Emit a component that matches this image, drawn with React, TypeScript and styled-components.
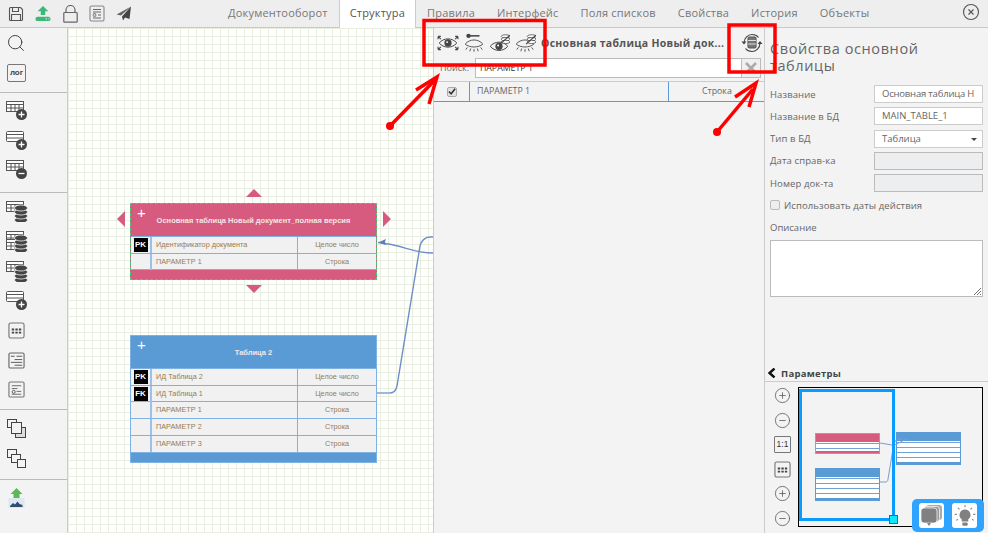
import React from 'react';
import styled, { createGlobalStyle } from 'styled-components';
import { LuSearch, LuCirclePlus, LuCircleMinus, LuCircleX } from 'react-icons/lu';

const GlobalStyle = createGlobalStyle`
  html, body { margin: 0; padding: 0; background: #f3f3f3; overflow: hidden; }
  * { box-sizing: border-box; }
  body { font-family: "Open Sans", "Liberation Sans", sans-serif; }
`;

const tabs = ['Документооборот', 'Структура', 'Правила', 'Интерфейс', 'Поля списков', 'Свойства', 'История', 'Объекты'];

type Row = { key?: string; name: string; type: string };

const mainRows: Row[] = [
  { key: 'PK', name: 'Идентификатор документа', type: 'Целое число' },
  { name: 'ПАРАМЕТР 1', type: 'Строка' },
];

const secondRows: Row[] = [
  { key: 'PK', name: 'ИД Таблица 2', type: 'Целое число' },
  { key: 'FK', name: 'ИД Таблица 1', type: 'Целое число' },
  { name: 'ПАРАМЕТР 1', type: 'Строка' },
  { name: 'ПАРАМЕТР 2', type: 'Строка' },
  { name: 'ПАРАМЕТР 3', type: 'Строка' },
];

const TableGlyph = ({ y = 0, x = 0 }: { x?: number; y?: number }) => (
  <g transform={`translate(${x} ${y})`} fill="#fff" stroke="#555" strokeWidth="1">
    <rect x="0.500" y="0.500" width="17" height="10" />
    <path d="M0.500 3.500h17M0.500 7h17M5 3.500v7M9 3.500v7M13 3.500v7" fill="none" />
  </g>
);

const RowsGlyph = () => (
  <g fill="#fff" stroke="#555" strokeWidth="1">
    <rect x="0.500" y="0.500" width="17" height="10" rx="1" />
    <path d="M0.500 3.500h17M0.500 7h17" fill="none" />
  </g>
);

const Badge = ({ minus }: { minus?: boolean }) => (
  <g>
    <circle cx="15.500" cy="13.500" r="5.500" fill="#444" />
    <path d={minus ? 'M12.500 13.500h6' : 'M12.500 13.500h6M15.500 10.500v6'} stroke="#fff" strokeWidth="1.300" />
  </g>
);

const Barrel = ({ x = 15, y = 8 }: { x?: number; y?: number }) => (
  <g fill="#444" stroke="#f3f3f3" strokeWidth="0.800">
    <ellipse cx={x} cy={y + 12} rx="6.500" ry="3" />
    <ellipse cx={x} cy={y + 8} rx="6.500" ry="3" />
    <ellipse cx={x} cy={y + 4} rx="6.500" ry="3" />
    <ellipse cx={x} cy={y} rx="6.500" ry="3" />
  </g>
);

const FormGlyph = () => (
  <svg width="17" height="17" viewBox="0 0 18 18">
    <rect x="1" y="1" width="16" height="16" rx="1.500" fill="#f3f3f3" stroke="#777" strokeWidth="1.200" />
    <path d="M4 5h10M4 8h6" stroke="#666" fill="none" />
    <circle cx="6" cy="11.500" r="1.600" fill="none" stroke="#555" />
    <path d="M9 11h5M4 14h10" stroke="#666" fill="none" />
  </svg>
);

const LinesGlyph = () => (
  <svg width="17" height="17" viewBox="0 0 18 18">
    <rect x="1" y="1" width="16" height="16" rx="1.500" fill="#f3f3f3" stroke="#666" strokeWidth="1.200" />
    <path d="M3 4.500h4M9 4.500h6M7 8h8M3 11h12M7 14h8" stroke="#555" fill="none" />
  </svg>
);

const DotsGlyph = ({ size = 17 }: { size?: number }) => (
  <svg width={size} height={size} viewBox="0 0 18 18">
    <rect x="1" y="1" width="16" height="16" rx="2" fill="#f3f3f3" stroke="#777" strokeWidth="1.200" />
    <path d="M4 7h2.500v2H4zM7.800 7h2.500v2H7.800zM11.500 7H14v2h-2.500zM4 10.200h2.500v2H4zM7.800 10.200h2.500v2H7.800zM11.500 10.200H14v2h-2.500z" fill="#444" />
  </svg>
);

const LayersGlyph = ({ back }: { back?: boolean }) => (
  <svg width="20" height="20" viewBox="0 0 20 20" fill="#f3f3f3" stroke="#444" strokeWidth="1">
    {back ? (
      <>
        <rect x="0.500" y="0.500" width="9" height="8" />
        <rect x="4.500" y="5.500" width="9" height="8" />
        <rect x="10.500" y="10.500" width="8" height="8" />
      </>
    ) : (
      <>
        <rect x="8.500" y="8.500" width="10" height="10" fill="#ddd" />
        <rect x="0.500" y="0.500" width="9" height="8" />
        <rect x="4.500" y="3.500" width="10" height="11" />
      </>
    )}
  </svg>
);

const EyeOpen = () => (
  <g fill="none" stroke="#444">
    <path d="M2 9c4-5 12-5 16 0-4 5-12 5-16 0z" strokeWidth="0.900" />
    <circle cx="10" cy="9" r="2.800" fill="#444" />
    <circle cx="9.200" cy="8.200" r="0.900" fill="#fff" stroke="none" />
  </g>
);

const EyeShut = () => (
  <g fill="none" stroke="#444" strokeWidth="0.800">
    <path d="M2 10c4-5 12-5 16 0-4 3.500-12 3.500-16 0z" />
    <path d="M4 13l-1.500 2M7 14l-.8 2.500M10 14.500V17M13 14l.8 2.500M16 13l1.500 2" />
  </g>
);

const DbMark = () => (
  <g stroke="#444" fill="#fff" strokeWidth="0.700">
    <ellipse cx="16" cy="3" rx="4" ry="1.500" />
    <ellipse cx="16" cy="5.500" rx="4" ry="1.500" />
    <ellipse cx="16" cy="8" rx="4" ry="1.500" />
    <path d="M11 10l9-8" strokeWidth="1.100" />
  </g>
);

const CHROME = [
  <svg key="save" width="16" height="16" viewBox="0 0 16 16" fill="none" stroke="#555" strokeWidth="1.100">
    <path d="M1.500 2.500a1 1 0 0 1 1-1h10l2 2v10a1 1 0 0 1-1 1h-11a1 1 0 0 1-1-1z" />
    <path d="M4.500 1.500v4h6v-4M3.500 14.500v-6h9v6" />
  </svg>,
  <svg key="upload" width="18" height="18" viewBox="0 0 18 18">
    <path d="M9 0l6 6h-3.500v4h-5V6H3z" fill="#3cb878" />
    <rect x="0.500" y="12" width="17" height="5" rx="2.500" fill="#3cb878" />
    <path d="M12 14.500h1.500M15 14.500h1" stroke="#fff" />
  </svg>,
  <svg key="lock" width="15" height="18" viewBox="0 0 15 18" fill="none" stroke="#666" strokeWidth="1.200">
    <rect x="0.800" y="7.500" width="13.400" height="9.700" rx="0.800" />
    <path d="M3 7.500V5a4.500 4.500 0 0 1 9 0v2.500" />
  </svg>,
  <svg key="doc" width="16" height="17" viewBox="0 0 16 17" fill="#eee" stroke="#888" strokeWidth="1.100">
    <rect x="1" y="1" width="14" height="15" rx="1.500" />
    <path d="M4 4.500h8M4 7h8M9 10h3M4 13h8" stroke="#666" fill="none" />
    <circle cx="5.500" cy="10" r="1.400" fill="none" />
  </svg>,
  <svg key="plane" width="16" height="15" viewBox="0 0 16 15">
    <path d="M15 0.500L0.500 8.500l4.500 1L15 0.500z" fill="#666" />
    <path d="M15 0.500L6 10.500l1 4 2-3 4.500 1.500z" fill="#444" />
  </svg>,
];

const Diagram = ({ title, rows, selected, color }: { title: string; rows: Row[]; selected?: boolean; color: string }) => (
  <Node $color={color} $selected={selected} $top={selected ? 203 : 335}>
    <NodeHead>
      <NodePlus>+</NodePlus>
      <NodeTitle>{title}</NodeTitle>
    </NodeHead>
    {rows.map((row) => (
      <NodeRow key={row.name}>
        <KeyCell>{row.key && <KeyBadge>{row.key}</KeyBadge>}</KeyCell>
        <NameCell>{row.name}</NameCell>
        <TypeCell>{row.type}</TypeCell>
      </NodeRow>
    ))}
    <NodeFoot />
  </Node>
);

const App: React.FC = () => {
  return (
    <Page>
      <GlobalStyle />
      <TopBar>
        <ToolGroup>
          {CHROME.map((icon, i) => (
            <ToolSlot key={i}>{icon}</ToolSlot>
          ))}
        </ToolGroup>
        <Tabs>
          {tabs.map((tab) => (
            <Tab key={tab} $active={tab === 'Структура'}>
              {tab}
            </Tab>
          ))}
        </Tabs>
        <CloseButton>
          <LuCircleX size={18} color="#555" strokeWidth={1.500} />
        </CloseButton>
      </TopBar>

      <Body>
        <Sidebar>
          <SideGroup>
            <SideSlot><LuSearch size={20} color="#444" strokeWidth={1.200} /></SideSlot>
            <SideSlot><LogBadge>лог</LogBadge></SideSlot>
          </SideGroup>
          <SideGroup $height={100} $pad={3}>
            <SideSlot><svg width="22" height="20" viewBox="0 0 22 20"><TableGlyph /><Badge /></svg></SideSlot>
            <SideSlot><svg width="22" height="20" viewBox="0 0 22 20"><RowsGlyph /><Badge /></svg></SideSlot>
            <SideSlot><svg width="22" height="20" viewBox="0 0 22 20"><TableGlyph /><Badge minus /></svg></SideSlot>
          </SideGroup>
          <SideGroup $height={217} $pad={4}>
            <SideSlot><svg width="22" height="21" viewBox="0 0 22 21"><TableGlyph /><Barrel y={7} /></svg></SideSlot>
            <SideSlot><svg width="22" height="21" viewBox="0 0 22 21"><TableGlyph /><TableGlyph y={8} /><Barrel y={7} /></svg></SideSlot>
            <SideSlot><svg width="22" height="21" viewBox="0 0 22 21"><TableGlyph /><Barrel y={7} /></svg></SideSlot>
            <SideSlot><svg width="22" height="20" viewBox="0 0 22 20"><RowsGlyph /><Badge /></svg></SideSlot>
            <SideSlot $inset={2}><DotsGlyph /></SideSlot>
            <SideSlot $inset={2}><LinesGlyph /></SideSlot>
            <SideSlot $inset={2}><FormGlyph /></SideSlot>
          </SideGroup>
          <SideGroup $height={70} $pad={4}>
            <SideSlot $inset={1}><LayersGlyph /></SideSlot>
            <SideSlot $inset={1}><LayersGlyph back /></SideSlot>
          </SideGroup>
          <SideGroup $height={54} $pad={3} $last>
            <SideSlot $inset={2}>
              <svg width="17" height="20" viewBox="0 0 17 20">
                <path d="M8.500 0l6 6h-3v5h-6V6h-3z" fill="#5cb85c" />
                <rect x="0.500" y="10" width="16" height="10" fill="#dfe8f0" />
                <path d="M2 18l3-3 2 1.500 2.500-3 2 2.500 3 1V19H2z" fill="#2d4f73" />
              </svg>
            </SideSlot>
          </SideGroup>
        </Sidebar>

        <Canvas>
          <Diagram title="Основная таблица Новый документ_полная версия" rows={mainRows} selected color="#d75a7f" />
          <Diagram title="Таблица 2" rows={secondRows} color="#5b9bd5" />
          <Handle $dir="up" />
          <Handle $dir="down" />
          <Handle $dir="left" />
          <Handle $dir="right" />
          <LinkLayer viewBox="0 0 365 505">
            <path d="M365 225c-18 0-30-7-45-9-4-.5-6-1-10-1.500" stroke="#6f8fc8" strokeWidth="1.400" fill="none" />
            <path d="M310 365h12c4 0 6-3 7-7l23-140c1-5 5-9 10-9h3" stroke="#6f8fc8" strokeWidth="1.400" fill="none" />
            <path d="M309 365h13" stroke="#9db5e0" strokeWidth="2" fill="none" />
            <path d="M310 214.500l8-3.500-1 3 1 3z" fill="#5d80bd" />
          </LinkLayer>
        </Canvas>

        <Center>
          <CenterHead>
            <EyeGroup>
              <svg width="22" height="20" viewBox="0 0 20 18"><EyeOpen /><path d="M1 3l2.500 2.500M1 3h2.500M1 3v2.500M19 3l-2.500 2.500M19 3h-2.500M19 3v2.500M1 15l2.500-2.500M1 15h2.500M1 15v-2.500M19 15l-2.500-2.500M19 15h-2.500M19 15v-2.500" stroke="#444" fill="none" /></svg>
              <svg width="22" height="20" viewBox="0 0 20 18"><EyeShut /><path d="M4 2.500h11" stroke="#444" strokeWidth="1.400" /><circle cx="5" cy="2.500" r="2" fill="#444" /></svg>
              <svg width="22" height="20" viewBox="0 0 20 18"><g transform="translate(0 3)"><EyeOpen /></g><DbMark /></svg>
              <svg width="22" height="20" viewBox="0 0 20 18"><EyeShut /><DbMark /></svg>
            </EyeGroup>
            <CenterTitle>Основная таблица Новый док...</CenterTitle>
            <RefreshSlot>
              <svg width="22" height="20" viewBox="0 0 22 20" fill="none" stroke="#444" strokeWidth="1.100">
                <rect x="7" y="4" width="8" height="11" rx="1.500" fill="#777" stroke="#555" />
                <path d="M7 7.500h8M7 11h8" stroke="#ddd" />
                <path d="M3 10c0-5 4-8.500 8-8.500 3 0 5 1 6.500 3M19 10c0 5-4 8.500-8 8.500-3 0-5-1-6.500-3" />
                <path d="M0.500 8.500l2.500 3 2.500-3zM16.500 11l2.500-3 2.500 3z" fill="#444" stroke="none" />
              </svg>
            </RefreshSlot>
          </CenterHead>
          <SearchRow>
            <SearchLabel>Поиск:</SearchLabel>
            <SearchBox>
              <SearchInput>ПАРАМЕТР 1</SearchInput>
              <ClearButton>
                <svg width="14" height="14" viewBox="0 0 14 14"><path d="M2 2l10 10M12 2L2 12" stroke="#aaa" strokeWidth="2.600" /></svg>
              </ClearButton>
            </SearchBox>
          </SearchRow>
          <ParamRow>
            <ParamCheck>
              <CheckBox>
                <svg width="9" height="9" viewBox="0 0 9 9"><path d="M1 4.500l2.500 2.500L8 1.500" stroke="#333" strokeWidth="1.800" fill="none" /></svg>
              </CheckBox>
            </ParamCheck>
            <ParamName>ПАРАМЕТР 1</ParamName>
            <ParamType>Строка</ParamType>
          </ParamRow>
        </Center>

        <Props>
          <PropsForm>
            <PropsTitle>Свойства основной таблицы</PropsTitle>
            <Field>
              <FieldLabel>Название</FieldLabel>
              <FieldValue><FieldText $tight>Основная таблица Н</FieldText></FieldValue>
            </Field>
            <Field>
              <FieldLabel>Название в БД</FieldLabel>
              <FieldValue><FieldText>MAIN_TABLE_1</FieldText></FieldValue>
            </Field>
            <Field>
              <FieldLabel>Тип в БД</FieldLabel>
              <FieldValue>
                <FieldText>Таблица</FieldText>
                <SelectCaret />
              </FieldValue>
            </Field>
            <Field>
              <FieldLabel>Дата справ-ка</FieldLabel>
              <FieldValue $disabled />
            </Field>
            <Field>
              <FieldLabel>Номер док-та</FieldLabel>
              <FieldValue $disabled />
            </Field>
            <CheckRow>
              <EmptyCheck />
              Использовать даты действия
            </CheckRow>
            <DescLabel>Описание</DescLabel>
            <DescBox>
              <svg width="9" height="9" viewBox="0 0 9 9"><path d="M1 8l7-7M4 8l4-4M7 8l1-1" stroke="#777" fill="none" /></svg>
            </DescBox>
          </PropsForm>
          <ParamsHead>
            <svg width="8" height="10" viewBox="0 0 8 10"><path d="M6.500 0.500L1.500 5l5 4.500" stroke="#111" strokeWidth="2.400" fill="none" /></svg>
            Параметры
          </ParamsHead>
          <MapArea>
            <MapTools>
              <LuCirclePlus size={17} color="#555" strokeWidth={1.100} />
              <LuCircleMinus size={17} color="#555" strokeWidth={1.100} />
              <OneToOne>1:1</OneToOne>
              <DotsGlyph size={17} />
              <LuCirclePlus size={17} color="#555" strokeWidth={1.100} />
              <LuCircleMinus size={17} color="#555" strokeWidth={1.100} />
            </MapTools>
            <MiniMap>
              <MiniTable $x={16} $y={45} $h={21} $color="#d75a7f" $foot />
              <MiniTable $x={16} $y={80} $h={33} $color="#5b9bd5" />
              <MiniTable $x={97} $y={44} $h={33} $color="#5b9bd5" />
              <MiniLinks viewBox="0 0 184 139">
                <path d="M81 55l12 2c4 1 8-4 16-6M81 94h5c2 0 3-1 3-3l6-36c1-3 4-4 8-4" stroke="#7d9bd0" fill="none" />
              </MiniLinks>
              <MiniView>
                <MiniGrip />
              </MiniView>
            </MiniMap>
          </MapArea>
          <HelpDock>
            <HelpButton>
              <svg width="23" height="23" viewBox="0 0 23 23">
                <rect x="6" y="1" width="16" height="15" rx="3" fill="#aaa" />
                <rect x="3.500" y="2.500" width="16" height="15" rx="3" fill="#999" stroke="#fff" strokeWidth="0.700" />
                <rect x="1" y="4" width="16" height="15" rx="3" fill="#808080" stroke="#fff" strokeWidth="0.700" />
                <path d="M7 19h4l-2 3z" fill="#808080" />
              </svg>
            </HelpButton>
            <HelpButton>
              <svg width="24" height="24" viewBox="0 0 22 22" fill="#808080">
                <path d="M11 5a5 5 0 0 0-3 9v2h6v-2a5 5 0 0 0-3-9z" />
                <rect x="8.500" y="17" width="5" height="3" rx="1" />
                <path d="M11 1v2M4.500 3.500l1.500 1.500M17.500 3.500L16 5M1.500 9.500h2M18.500 9.500h2M3 15l1.500-1M19 15l-1.500-1" stroke="#888" fill="none" />
              </svg>
            </HelpButton>
          </HelpDock>
        </Props>
      </Body>

      <Annotations viewBox="0 0 988 533">
        <rect x="424" y="20.500" width="121" height="44.500" fill="none" stroke="#f00" strokeWidth="3.500" />
        <rect x="729" y="25" width="46" height="47" fill="none" stroke="#f00" strokeWidth="3.500" />
        <path d="M390 126L435 80" stroke="#f00" strokeWidth="3.500" fill="none" />
        <path d="M416 90l21-13-8 27" stroke="#f00" strokeWidth="3.500" fill="none" />
        <circle cx="390" cy="126" r="4" fill="#f00" />
        <path d="M717 132L753 89" stroke="#f00" strokeWidth="3.500" fill="none" />
        <path d="M735 97l21-14-7 24" stroke="#f00" strokeWidth="3.500" fill="none" />
        <circle cx="717" cy="132" r="4" fill="#f00" />
      </Annotations>
    </Page>
  );
};

const Page = styled.div`
  position: relative;
  width: 988px;
  height: 533px;
  overflow: hidden;
  display: flex;
  flex-direction: column;
  background: #f3f3f3;
`;

const TopBar = styled.header`
  display: flex;
  align-items: stretch;
  height: 28px;
  background: #eee;
  border-bottom: 1px solid #c8c8c8;
`;

const ToolGroup = styled.div`
  display: flex;
  align-items: center;
  width: 217px;
  padding-left: 8px;
  gap: 11px;
`;

const ToolSlot = styled.span`
  display: flex;
  width: 16px;
  justify-content: center;
`;

const Tabs = styled.nav`
  display: flex;
  flex: 1;
`;

const Tab = styled.div<{ $active?: boolean }>`
  padding: 5px 11px 0;
  height: 28px;
  font-size: 11px;
  letter-spacing: 0.200px;
  line-height: 16px;
  color: #777;
  white-space: nowrap;
  ${(p) =>
    p.$active &&
    `
    background: #fff;
    color: #555;
    box-shadow: inset 1px 0 #ccc, inset -1px 0 #ccc;
  `}
`;

const CloseButton = styled.div`
  display: flex;
  align-items: center;
  padding: 0 8px 4px 0;
`;

const Body = styled.div`
  display: flex;
  flex: 1;
  min-height: 0;
`;

const Sidebar = styled.aside`
  width: 68px;
  flex: none;
  background: #f3f3f3;
  border-right: 1px solid #ccc;
`;

const SideGroup = styled.div<{ $height?: number; $pad?: number; $last?: boolean }>`
  height: ${(p) => p.$height ?? 65}px;
  padding-top: ${(p) => p.$pad ?? 0}px;
  border-bottom: ${(p) => (p.$last ? 'none' : '1px solid #bbb')};
`;

const SideSlot = styled.div<{ $inset?: number }>`
  display: flex;
  align-items: center;
  height: 29.700px;
  padding-left: ${(p) => 6 + (p.$inset ?? 0)}px;
`;

const LogBadge = styled.div`
  width: 19px;
  height: 18px;
  margin-left: 1px;
  border: 1px solid #777;
  border-radius: 2px;
  font-family: "Liberation Sans", sans-serif;
  font-size: 8px;
  font-weight: bold;
  line-height: 15px;
  text-align: center;
  color: #444;
`;

const Canvas = styled.main`
  position: relative;
  width: 365px;
  flex: none;
  background-color: #fff;
  background-image: linear-gradient(#e9efdf 1px, transparent 1px), linear-gradient(90deg, #e9efdf 1px, transparent 1px);
  background-size: 8px 8px;
  overflow: hidden;
`;

const Node = styled.div<{ $color: string; $selected?: boolean; $top: number }>`
  position: absolute;
  left: 62px;
  top: ${(p) => p.$top - 28}px;
  width: 247px;
  background: ${(p) => p.$color};
  border: 1px ${(p) => (p.$selected ? 'dashed #3fcf75' : 'solid #7fb2e2')};
  font-family: "Liberation Sans", sans-serif;
`;

const NodeHead = styled.div`
  position: relative;
  height: 32px;
  display: flex;
  align-items: center;
  justify-content: center;
`;

const NodePlus = styled.span`
  position: absolute;
  left: 6px;
  top: -1px;
  color: #fff;
  font-size: 15px;
  line-height: 20px;
`;

const NodeTitle = styled.span`
  font-size: 7.500px;
  font-weight: bold;
  color: #f4e6ea;
  white-space: nowrap;
`;

const NodeRow = styled.div`
  display: grid;
  grid-template-columns: 19px 147px 1fr;
  height: 17px;
  margin-bottom: -0.300px;
  background: #f1f1f1;
  border-top: 1px solid #7fb2e2;
  font-size: 7.300px;
  color: #9a7b4f;
  line-height: 15px;
`;

const KeyCell = styled.div`
  display: flex;
  align-items: center;
  justify-content: center;
`;

const KeyBadge = styled.span`
  display: block;
  width: 14px;
  height: 14px;
  background: #000;
  color: #fff;
  font-weight: bold;
  font-size: 8px;
  line-height: 13px;
  text-align: center;
`;

const NameCell = styled.div`
  padding-left: 4px;
  border-left: 2px solid #9cc0e8;
  white-space: nowrap;
`;

const TypeCell = styled.div`
  border-left: 1px solid #7fb2e2;
  text-align: center;
`;

const NodeFoot = styled.div`
  height: 10px;
  border-top: 1px solid #7fb2e2;
`;

const Handle = styled.span<{ $dir: 'up' | 'down' | 'left' | 'right' }>`
  position: absolute;
  width: 0;
  height: 0;
  border-style: solid;
  border-color: transparent;
  ${(p) => p.$dir === 'up' && 'left: 178px; top: 161px; border-width: 0 8px 8px; border-bottom-color: #d75a7f;'}
  ${(p) => p.$dir === 'down' && 'left: 178px; top: 257px; border-width: 8px 8px 0; border-top-color: #d75a7f;'}
  ${(p) => p.$dir === 'left' && 'left: 49px; top: 183px; border-width: 8px 8px 8px 0; border-right-color: #d75a7f;'}
  ${(p) => p.$dir === 'right' && 'left: 315px; top: 183px; border-width: 8px 0 8px 8px; border-left-color: #d75a7f;'}
`;

const LinkLayer = styled.svg`
  position: absolute;
  left: 0;
  top: 0;
  width: 365px;
  height: 505px;
  pointer-events: none;
`;

const Center = styled.section`
  width: 332px;
  flex: none;
  background: #f3f3f3;
  border-left: 1px solid #ccc;
  border-right: 1px solid #ccc;
`;

const CenterHead = styled.div`
  display: flex;
  align-items: center;
  height: 30px;
  padding-left: 3px;
`;

const EyeGroup = styled.div`
  display: flex;
  gap: 3.500px;
  width: 104px;
  flex: none;
`;

const CenterTitle = styled.div`
  width: 185px;
  flex: none;
  font-size: 10.500px;
  font-weight: bold;
  letter-spacing: 0.300px;
  color: #555;
  white-space: nowrap;
`;

const RefreshSlot = styled.div`
  display: flex;
  margin-left: 15px;
`;

const SearchRow = styled.div`
  display: flex;
  align-items: center;
  height: 20px;
  padding: 0 3px;
`;

const SearchLabel = styled.div`
  width: 38px;
  padding-left: 3px;
  font-size: 9px;
  line-height: 20px;
  color: #666;
`;

const SearchBox = styled.div`
  display: flex;
  width: 287px;
  height: 20px;
  border: 1px solid #bbb;
  background: #fff;
`;

const SearchInput = styled.div`
  flex: 1;
  padding-left: 4px;
  font-size: 8.800px;
  line-height: 19px;
  color: #333;
`;

const ClearButton = styled.div`
  width: 19px;
  display: flex;
  align-items: center;
  justify-content: center;
  background: #f0f0f0;
  border-left: 1px solid #bbb;
`;

const ParamRow = styled.div`
  display: grid;
  grid-template-columns: 35px 199px 1fr;
  height: 21px;
  margin-top: 3px;
  border-top: 1px solid #ccc;
  border-bottom: 1px solid #5b9bd5;
  font-size: 8.800px;
  line-height: 19px;
  color: #666;
`;

const ParamCheck = styled.div`
  display: flex;
  align-items: center;
  justify-content: center;
`;

const CheckBox = styled.span`
  display: flex;
  align-items: center;
  justify-content: center;
  width: 10px;
  height: 10px;
  background: #e3e3e3;
  border: 1px solid #aaa;
  border-radius: 2px;
`;

const ParamName = styled.div`
  padding-left: 7px;
  border-left: 1px solid #5b9bd5;
`;

const ParamType = styled.div`
  padding-left: 33px;
  border-left: 1px solid #5b9bd5;
`;

const Props = styled.aside`
  position: relative;
  flex: 1;
  display: flex;
  flex-direction: column;
  padding-left: 5px;
  min-width: 0;
`;

const PropsForm = styled.div`
  height: 325px;
  padding: 12px 5px 0 0;
`;

const PropsTitle = styled.h2`
  margin: 0 0 11px;
  font-size: 14.500px;
  font-weight: normal;
  letter-spacing: 0.600px;
  line-height: 17px;
  color: #666;
`;

const Field = styled.div`
  display: grid;
  grid-template-columns: 104px 109px;
  align-items: center;
  height: 18px;
  margin-bottom: 4.300px;
`;

const FieldLabel = styled.div`
  font-size: 9.500px;
  letter-spacing: 0.100px;
  color: #666;
  white-space: nowrap;
`;

const FieldValue = styled.div<{ $disabled?: boolean }>`
  position: relative;
  height: 18px;
  border: 1px solid ${(p) => (p.$disabled ? '#bbb' : '#ccc')};
  background: ${(p) => (p.$disabled ? '#eceeef' : '#fff')};
`;

const FieldText = styled.div<{ $tight?: boolean }>`
  margin-left: 7px;
  font-size: 9.500px;
  letter-spacing: ${(p) => (p.$tight ? '-0.200px' : '0')};
  line-height: 16px;
  color: #666;
  white-space: nowrap;
`;

const SelectCaret = styled.span`
  position: absolute;
  right: 5px;
  top: 7px;
  border-style: solid;
  border-width: 3px 3.500px 0;
  border-color: #444 transparent transparent;
`;

const CheckRow = styled.div`
  display: flex;
  align-items: center;
  gap: 4px;
  height: 18px;
  margin-top: 4px;
  font-size: 9.500px;
  letter-spacing: 0.100px;
  color: #666;
`;

const EmptyCheck = styled.span`
  width: 10px;
  height: 10px;
  border: 1px solid #bbb;
  border-radius: 2px;
  background: #eee;
`;

const DescLabel = styled.div`
  margin-top: 5px;
  font-size: 9.500px;
  line-height: 18px;
  color: #666;
`;

const DescBox = styled.div`
  display: flex;
  align-items: flex-end;
  justify-content: flex-end;
  width: 213px;
  height: 57px;
  margin-top: 3px;
  background: #fff;
  border: 1px solid #bbb;
`;

const ParamsHead = styled.div`
  display: flex;
  align-items: center;
  gap: 5px;
  height: 29px;
  margin-left: -5px;
  padding: 12px 0 0 3px;
  border-bottom: 1px solid #ccc;
  font-size: 9.500px;
  font-weight: 700;
  letter-spacing: 0.300px;
  color: #444;
`;

const MapArea = styled.div`
  display: flex;
  padding-top: 5px;
`;

const MapTools = styled.div`
  width: 29px;
  display: flex;
  flex-direction: column;
  align-items: center;
  gap: 7.500px;
  margin-left: -2px;
  margin-right: 1px;
`;

const OneToOne = styled.div`
  width: 17px;
  height: 17px;
  border: 1px solid #777;
  border-radius: 1px;
  font-family: "Liberation Sans", sans-serif;
  font-size: 8.500px;
  line-height: 15px;
  text-align: center;
  color: #333;
`;

const MiniMap = styled.div`
  position: relative;
  width: 185px;
  height: 140px;
  border: 1px solid #000;
`;

const MiniTable = styled.div<{ $x: number; $y: number; $h: number; $color: string; $foot?: boolean }>`
  position: absolute;
  left: ${(p) => p.$x}px;
  top: ${(p) => p.$y}px;
  width: 65px;
  height: ${(p) => p.$h}px;
  border: 1px solid ${(p) => (p.$foot ? '#7fa6d8' : p.$color)};
  background: repeating-linear-gradient(#fff 0, #fff 4px, #6fa3d8 4px, #6fa3d8 5px);
  &::before {
    content: '';
    display: block;
    height: 8px;
    background: ${(p) => p.$color};
  }
  &::after {
    content: '';
    position: absolute;
    left: 0;
    right: 0;
    bottom: 0;
    height: 2px;
    background: ${(p) => p.$color};
  }
`;

const MiniLinks = styled.svg`
  position: absolute;
  left: 0;
  top: 0;
  width: 184px;
  height: 139px;
`;

const MiniView = styled.div`
  position: absolute;
  left: 0;
  top: 1px;
  width: 96px;
  height: 132px;
  border: 3px solid #0a9bff;
`;

const MiniGrip = styled.span`
  position: absolute;
  right: -6px;
  bottom: -6px;
  width: 9px;
  height: 9px;
  background: #11e6ff;
  border: 1px solid #0a6fd0;
`;

const HelpDock = styled.div`
  position: absolute;
  right: 4px;
  bottom: 1px;
  display: flex;
  gap: 8px;
  padding: 4px 7px;
  background: #2ea3ff;
  border-radius: 5px;
`;

const HelpButton = styled.div`
  display: flex;
  align-items: center;
  justify-content: center;
  width: 25px;
  height: 25px;
  background: #fff;
  border-radius: 3px;
`;

const Annotations = styled.svg`
  position: absolute;
  left: 0;
  top: 0;
  width: 988px;
  height: 533px;
  pointer-events: none;
`;

export default App;
